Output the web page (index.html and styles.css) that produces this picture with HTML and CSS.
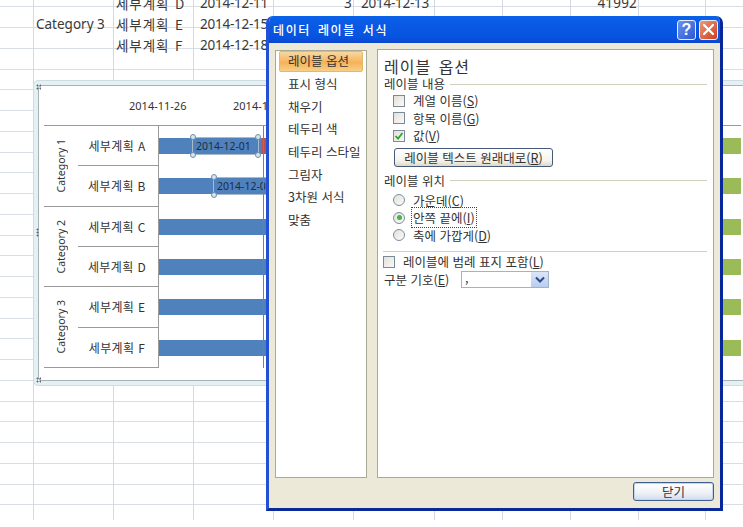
FILE: index.html
```html
<!DOCTYPE html>
<html lang="ko">
<head>
<meta charset="utf-8">
<title>데이터 레이블 서식</title>
<link rel="stylesheet" href="styles.css">
</head>
<body>
<div class="sheet">
  <div class="sheet-row first">
    <div class="c c1"></div><div class="c c2">세부계획 D</div><div class="c c3">2014-12-11</div><div class="c c4 num">3</div><div class="c c5">2014-12-13</div><div class="c c6"></div><div class="c c7"></div><div class="c c8 num">41992</div>
  </div>
  <div class="sheet-row">
    <div class="c c1 cat">Category 3</div><div class="c c2">세부계획 E</div><div class="c c3">2014-12-15</div>
  </div>
  <div class="sheet-row">
    <div class="c c1"></div><div class="c c2">세부계획 F</div><div class="c c3">2014-12-18</div>
  </div>
</div>

<div class="chart">
  <i class="grip g-tl"></i><i class="grip g-ml"></i><i class="grip g-bl"></i>
  <div class="chart-inner">
    <div class="axis"><span class="tick">2014-11-26</span><span class="tick">2014-12-01</span></div>
    <div class="gantt">
      <div class="cat-cell r1"><span>Category 1</span></div>
      <div class="sub">세부계획 A</div>
      <div class="plot">
        <div class="bar blue a"></div><div class="bar red"></div><div class="bar green"></div>
        <div class="dlabel la">2014-12-01<i class="h tl"></i><i class="h tr"></i><i class="h bl"></i><i class="h br"></i></div>
      </div>
      <div class="sub end">세부계획 B</div>
      <div class="plot">
        <div class="bar blue"></div><div class="bar green"></div>
        <div class="dlabel lb">2014-12-01<i class="h tl"></i><i class="h bl"></i></div>
      </div>
      <div class="cat-cell r2"><span>Category 2</span></div>
      <div class="sub">세부계획 C</div>
      <div class="plot"><div class="bar blue"></div><div class="bar green"></div></div>
      <div class="sub end">세부계획 D</div>
      <div class="plot"><div class="bar blue"></div><div class="bar green"></div></div>
      <div class="cat-cell r3"><span>Category 3</span></div>
      <div class="sub">세부계획 E</div>
      <div class="plot"><div class="bar blue"></div><div class="bar green"></div></div>
      <div class="sub end">세부계획 F</div>
      <div class="plot"><div class="bar blue"></div><div class="bar green"></div></div>
      <i class="guide"></i>
    </div>
  </div>
</div>

<div class="dialog">
  <div class="titlebar">
    <span class="title">데이터 레이블 서식</span>
    <span class="wbtn help">?</span>
    <span class="wbtn close"><svg width="13" height="13" viewBox="0 0 13 13"><path d="M2 2l9 9M11 2l-9 9" stroke="#fff" stroke-width="2.2" stroke-linecap="round"/></svg></span>
  </div>
  <div class="body">
    <ul class="nav">
      <li class="active">레이블 옵션</li>
      <li>표시 형식</li>
      <li>채우기</li>
      <li>테두리 색</li>
      <li>테두리 스타일</li>
      <li>그림자</li>
      <li>3차원 서식</li>
      <li>맞춤</li>
    </ul>
    <div class="panel">
      <h1 class="heading">레이블 옵션</h1>
      <div class="legend">레이블 내용</div>
      <div class="opts checks">
        <div class="opt"><i class="cb"></i><span>계열 이름(<u>S</u>)</span></div>
        <div class="opt"><i class="cb"></i><span>항목 이름(<u>G</u>)</span></div>
        <div class="opt"><i class="cb"><svg width="10" height="10" viewBox="0 0 10 10"><path d="M1.5 5l2.5 2.6L8.5 2" fill="none" stroke="#2fa52f" stroke-width="1.8"/></svg></i><span>값(<u>V</u>)</span></div>
      </div>
      <button class="btn reset" type="button">레이블 텍스트 원래대로(<u>R</u>)</button>
      <div class="legend second">레이블 위치</div>
      <div class="opts radios">
        <div class="opt"><i class="rb"></i><span>가운데(<u>C</u>)</span></div>
        <div class="opt"><i class="rb on"></i><span class="focus">안쪽 끝에(<u>I</u>)</span></div>
        <div class="opt"><i class="rb"></i><span>축에 가깝게(<u>D</u>)</span></div>
      </div>
      <div class="sep"></div>
      <div class="opt legend-key"><i class="cb"></i><span>레이블에 범례 표지 포함(<u>L</u>)</span></div>
      <div class="sepline">
        <span class="sep-label">구분 기호(<u>E</u>)</span>
        <div class="combo"><span class="combo-val">,</span><span class="combo-arrow"><svg width="10" height="8" viewBox="0 0 10 8"><path d="M1 1.5l4 4 4-4" fill="none" stroke="#2b4a86" stroke-width="2"/></svg></span></div>
      </div>
    </div>
  </div>
  <div class="footer"><button class="btn closebtn" type="button">닫기</button></div>
</div>
</body>
</html>
```
FILE: styles.css
```css
* { box-sizing: border-box; }
html, body { margin: 0; padding: 0; width: 743px; height: 527px; overflow: hidden; background: #fff; }
body {
  position: relative;
  font-family: "Noto Sans CJK KR", "Noto Sans", sans-serif;
  color: #333;
}
i { font-style: normal; display: block; }

/* worksheet */
.sheet {
  width: 743px;
  height: 527px;
  background-color: #fff;
  background-image:
    linear-gradient(#d3d8e3, #d3d8e3), linear-gradient(#d3d8e3, #d3d8e3),
    linear-gradient(#d3d8e3, #d3d8e3), linear-gradient(#d3d8e3, #d3d8e3),
    linear-gradient(#d3d8e3, #d3d8e3), linear-gradient(#d3d8e3, #d3d8e3),
    linear-gradient(#d3d8e3, #d3d8e3), linear-gradient(#d3d8e3, #d3d8e3),
    linear-gradient(#d3d8e3, #d3d8e3), linear-gradient(#d3d8e3, #d3d8e3),
    repeating-linear-gradient(to bottom, transparent 0, transparent 19.75px, #d9dde6 19.75px, #d9dde6 20.75px);
  background-size: 1px 100%, 1px 100%, 1px 100%, 1px 100%, 1px 100%, 1px 100%, 1px 100%, 1px 100%, 1px 100%, 1px 100%, 100% 100%;
  background-position: 33px 0, 113px 0, 193px 0, 273px 0, 353px 0, 434px 0, 502px 0, 570px 0, 638px 0, 705px 0, 0 -6.5px;
  background-repeat: no-repeat;
}
.sheet-row { display: flex; height: 20.75px; align-items: center; font-size: 13.5px; color: #3a3a3a; }
.sheet-row.first { margin-top: -7px; }
.c { flex: none; white-space: nowrap; overflow: hidden; padding-left: 3px; letter-spacing: .9px; word-spacing: 1px; }
.c1 { width: 113px; padding-left: 36px; font-family: "Noto Sans", sans-serif; letter-spacing: 0; word-spacing: 0; }
.c2 { width: 80px; }
.c3 { width: 80px; padding-left: 7px; font-family: "Noto Sans", sans-serif; letter-spacing: -.25px; }
.c4 { width: 80px; }
.c5 { width: 81px; padding-left: 8px; font-family: "Noto Sans", sans-serif; letter-spacing: -.25px; }
.c6 { width: 68px; }
.c7 { width: 68px; }
.c8 { width: 68px; }
.num { text-align: right; padding-right: 1px; font-family: "Noto Sans", sans-serif; letter-spacing: .2px; }

/* embedded chart */
.chart {
  position: absolute;
  left: 33px;
  top: 80px;
  width: 740px;
  height: 306px;
  padding: 4px;
  background: #e4f1f4;
  border: 1px solid #cfdde2;
  border-radius: 5px 0 0 5px;
}
.grip { position: absolute; left: 2px; width: 5px; height: 6px; background-image: radial-gradient(#667 0.9px, transparent 1.1px); background-size: 3px 3px; }
.g-tl { top: 3px; }
.g-ml { top: 147px; height: 9px; width: 3px; }
.g-bl { bottom: 2px; }
.chart-inner {
  height: 100%;
  background: #fff;
  border-top: 1px solid #a9b2b4;
  border-left: 1px solid #a9b2b4;
  border-bottom: 1px solid #a9b2b4;
  padding-left: 5px;
  border-radius: 4px 0 0 4px;
}
.axis { height: 39px; display: flex; padding-left: 85px; padding-top: 12px; font-family: "Noto Sans", sans-serif; font-size: 11px; color: #333; }
.tick { width: 104px; line-height: 15px; }
.gantt {
  position: relative;
  display: grid;
  grid-template-columns: 34px 81px 582px;
  grid-template-rows: repeat(6, 40.33px);
  border-top: 1px solid #9a9a9a;
  width: 697px;
}
.guide { position: absolute; left: 219px; top: 0; width: 1px; height: 242px; background: #7d7d7d; }
.cat-cell {
  grid-column: 1;
  border-bottom: 1px solid #9a9a9a;
  display: flex;
  align-items: center;
  justify-content: center;
  font-family: "Noto Sans", sans-serif;
  font-size: 10.5px;
  color: #333;
}
.cat-cell span { writing-mode: vertical-rl; transform: rotate(180deg); white-space: nowrap; }
.r1 { grid-row: 1 / span 2; }
.r2 { grid-row: 3 / span 2; }
.r3 { grid-row: 5 / span 2; }
.sub {
  grid-column: 2;
  display: flex;
  align-items: center;
  justify-content: center;
  padding-right: 2px;
  font-size: 12px;
  letter-spacing: .4px;
  color: #333;
  border-right: 1px solid #9a9a9a;
  border-bottom: 1px solid #9a9a9a;
}
.plot { grid-column: 3; position: relative; display: flex; align-items: center; }
.bar { height: 16px; flex: none; }
.blue { width: 112px; background: #4f81bd; }
.blue.a { width: 103px; }
.red { width: 8px; background: #c0504d; }
.green { width: 18px; background: #9bbb59; margin-left: auto; }
.dlabel {
  position: absolute;
  top: 11px;
  height: 18px;
  border: 1px solid #a9bac9;
  font-family: "Noto Sans", sans-serif;
  font-size: 10.5px;
  line-height: 16px;
  color: #1f2d3d;
  white-space: nowrap;
}
.la { left: 33px; width: 67px; padding-left: 3px; }
.lb { left: 54px; width: 67px; padding-left: 3px; }
.h { position: absolute; width: 6px; height: 6px; border-radius: 50%; background: #d5e6f2; border: 1px solid #6f8fae; }
.h.tl { left: -3px; top: -4px; }
.h.tr { right: -3px; top: -4px; }
.h.bl { left: -3px; bottom: -4px; }
.h.br { right: -3px; bottom: -4px; }

/* dialog */
.dialog {
  position: absolute;
  left: 266px;
  top: 16px;
  width: 457px;
  height: 495px;
  background: #ece9d8;
  border: 3px solid #0a34b8;
  border-top: 0;
  border-left-color: #2251d4;
  border-right-color: #07279c;
  border-bottom-color: #0a2a9a;
  border-radius: 7px 7px 0 0;
  display: flex;
  flex-direction: column;
  font-size: 12.5px;
  color: #333;
  overflow: hidden;
}
.titlebar {
  flex: none;
  height: 27px;
  margin: 0 -3px;
  padding: 0 5px 0 7px;
  display: flex;
  align-items: center;
  gap: 3px;
  background: linear-gradient(#0a62e8, #0a5ae6 30%, #0753df 80%, #0c45cc);
}
.title { flex: 1; color: #fff; font-size: 12px; font-weight: 500; letter-spacing: 1.6px; word-spacing: 2px; }
.wbtn { width: 19px; height: 20px; border: 1px solid #e8eefc; border-radius: 3px; display: flex; align-items: center; justify-content: center; }
.help { background: linear-gradient(135deg, #6b93ee, #2c57d2); color: #fff; font: bold 16px "Liberation Sans", sans-serif; }
.close { background: linear-gradient(135deg, #eb9a78, #cf3e1e); }
.body { flex: 1; display: flex; padding: 6px 6px 0; gap: 10px; min-height: 0; }
.nav {
  width: 92px;
  margin: 1px 0 0;
  padding: 0 3px;
  list-style: none;
  background: #fff;
  border: 1px solid #a9a998;
  font-size: 12.5px;
}
.nav li { height: 22.7px; padding-left: 9px; line-height: 21px; white-space: nowrap; }
.nav li.active {
  height: 21px;
  margin-bottom: 1px;
  background: linear-gradient(#f8d8a0, #f5b25a 55%, #f7cf86);
  border: 1px solid #e8b868;
  border-radius: 2px;
  padding-left: 8px;
  line-height: 18px;
}
.panel {
  flex: 1;
  background: #fff;
  border: 1px solid #a9a998;
  padding: 7px 6px 0 6px;
  font-size: 12.5px;
}
.heading { margin: 0 0 1px; font-size: 16px; font-weight: 400; line-height: 19px; letter-spacing: 1px; word-spacing: 2px; color: #333; }
.legend { display: flex; align-items: center; gap: 5px; height: 14px; line-height: 14px; white-space: nowrap; }
.legend::after { content: ""; flex: 1; height: 1px; background: #d0d0bf; }
.legend.second { margin-top: 7px; }
.opts { display: flex; flex-direction: column; }
.checks { padding: 3px 0 0 9px; gap: 4px; }
.radios { padding: 6px 0 0 9px; gap: 4px; }
.opt { display: flex; align-items: center; gap: 8px; height: 13.5px; white-space: nowrap; }
.cb {
  flex: none;
  width: 12px;
  height: 12px;
  border: 1px solid #7a8a99;
  background: linear-gradient(135deg, #e2e0d8, #fafaf6);
  display: flex;
  align-items: center;
  justify-content: center;
}
.rb {
  flex: none;
  width: 12px;
  height: 12px;
  border: 1px solid #7a8fa5;
  border-radius: 50%;
  background: linear-gradient(135deg, #e2e0d8, #fbfbf8);
  display: flex;
  align-items: center;
  justify-content: center;
}
.rb.on::after { content: ""; width: 5px; height: 5px; border-radius: 50%; background: #45b548; }
.focus { outline: 1px dotted #444; padding: 0 1px; margin-left: -1px; }
.btn {
  font-family: inherit;
  font-size: 12.5px;
  color: #333;
  border: 1px solid #46597a;
  border-radius: 3px;
  background: linear-gradient(#fff, #f4f3ec 70%, #dcd8c9);
  padding: 0;
}
.reset { display: block; width: 159px; height: 19px; margin: 5px 0 0 10px; line-height: 15px; }
.sep { height: 1px; background: #d0d0bf; margin: 9px 0 0 -1px; }
.legend-key { margin: 3px 0 0 -1px; height: 13px; }
.sepline { display: flex; align-items: center; height: 17px; margin-top: 3px; white-space: nowrap; }
.sep-label { width: 77px; }
.combo { width: 88px; height: 17px; border: 1px solid #9fb4cc; display: flex; align-items: stretch; background: #fff; }
.combo-val { flex: 1; padding-left: 3px; line-height: 12px; }
.combo-arrow { width: 17px; display: flex; align-items: center; justify-content: center; background: linear-gradient(#dbe6f8, #b8cdee); }
.footer { flex: none; height: 30px; display: flex; justify-content: flex-end; padding: 4px 6px 0 0; }
.closebtn { width: 81px; height: 19px; border-color: #3f5f92; background: linear-gradient(#fff, #eef1f6 60%, #cfdcef); line-height: 15px; box-shadow: inset 0 0 0 1px #c4d4ee; }
```
